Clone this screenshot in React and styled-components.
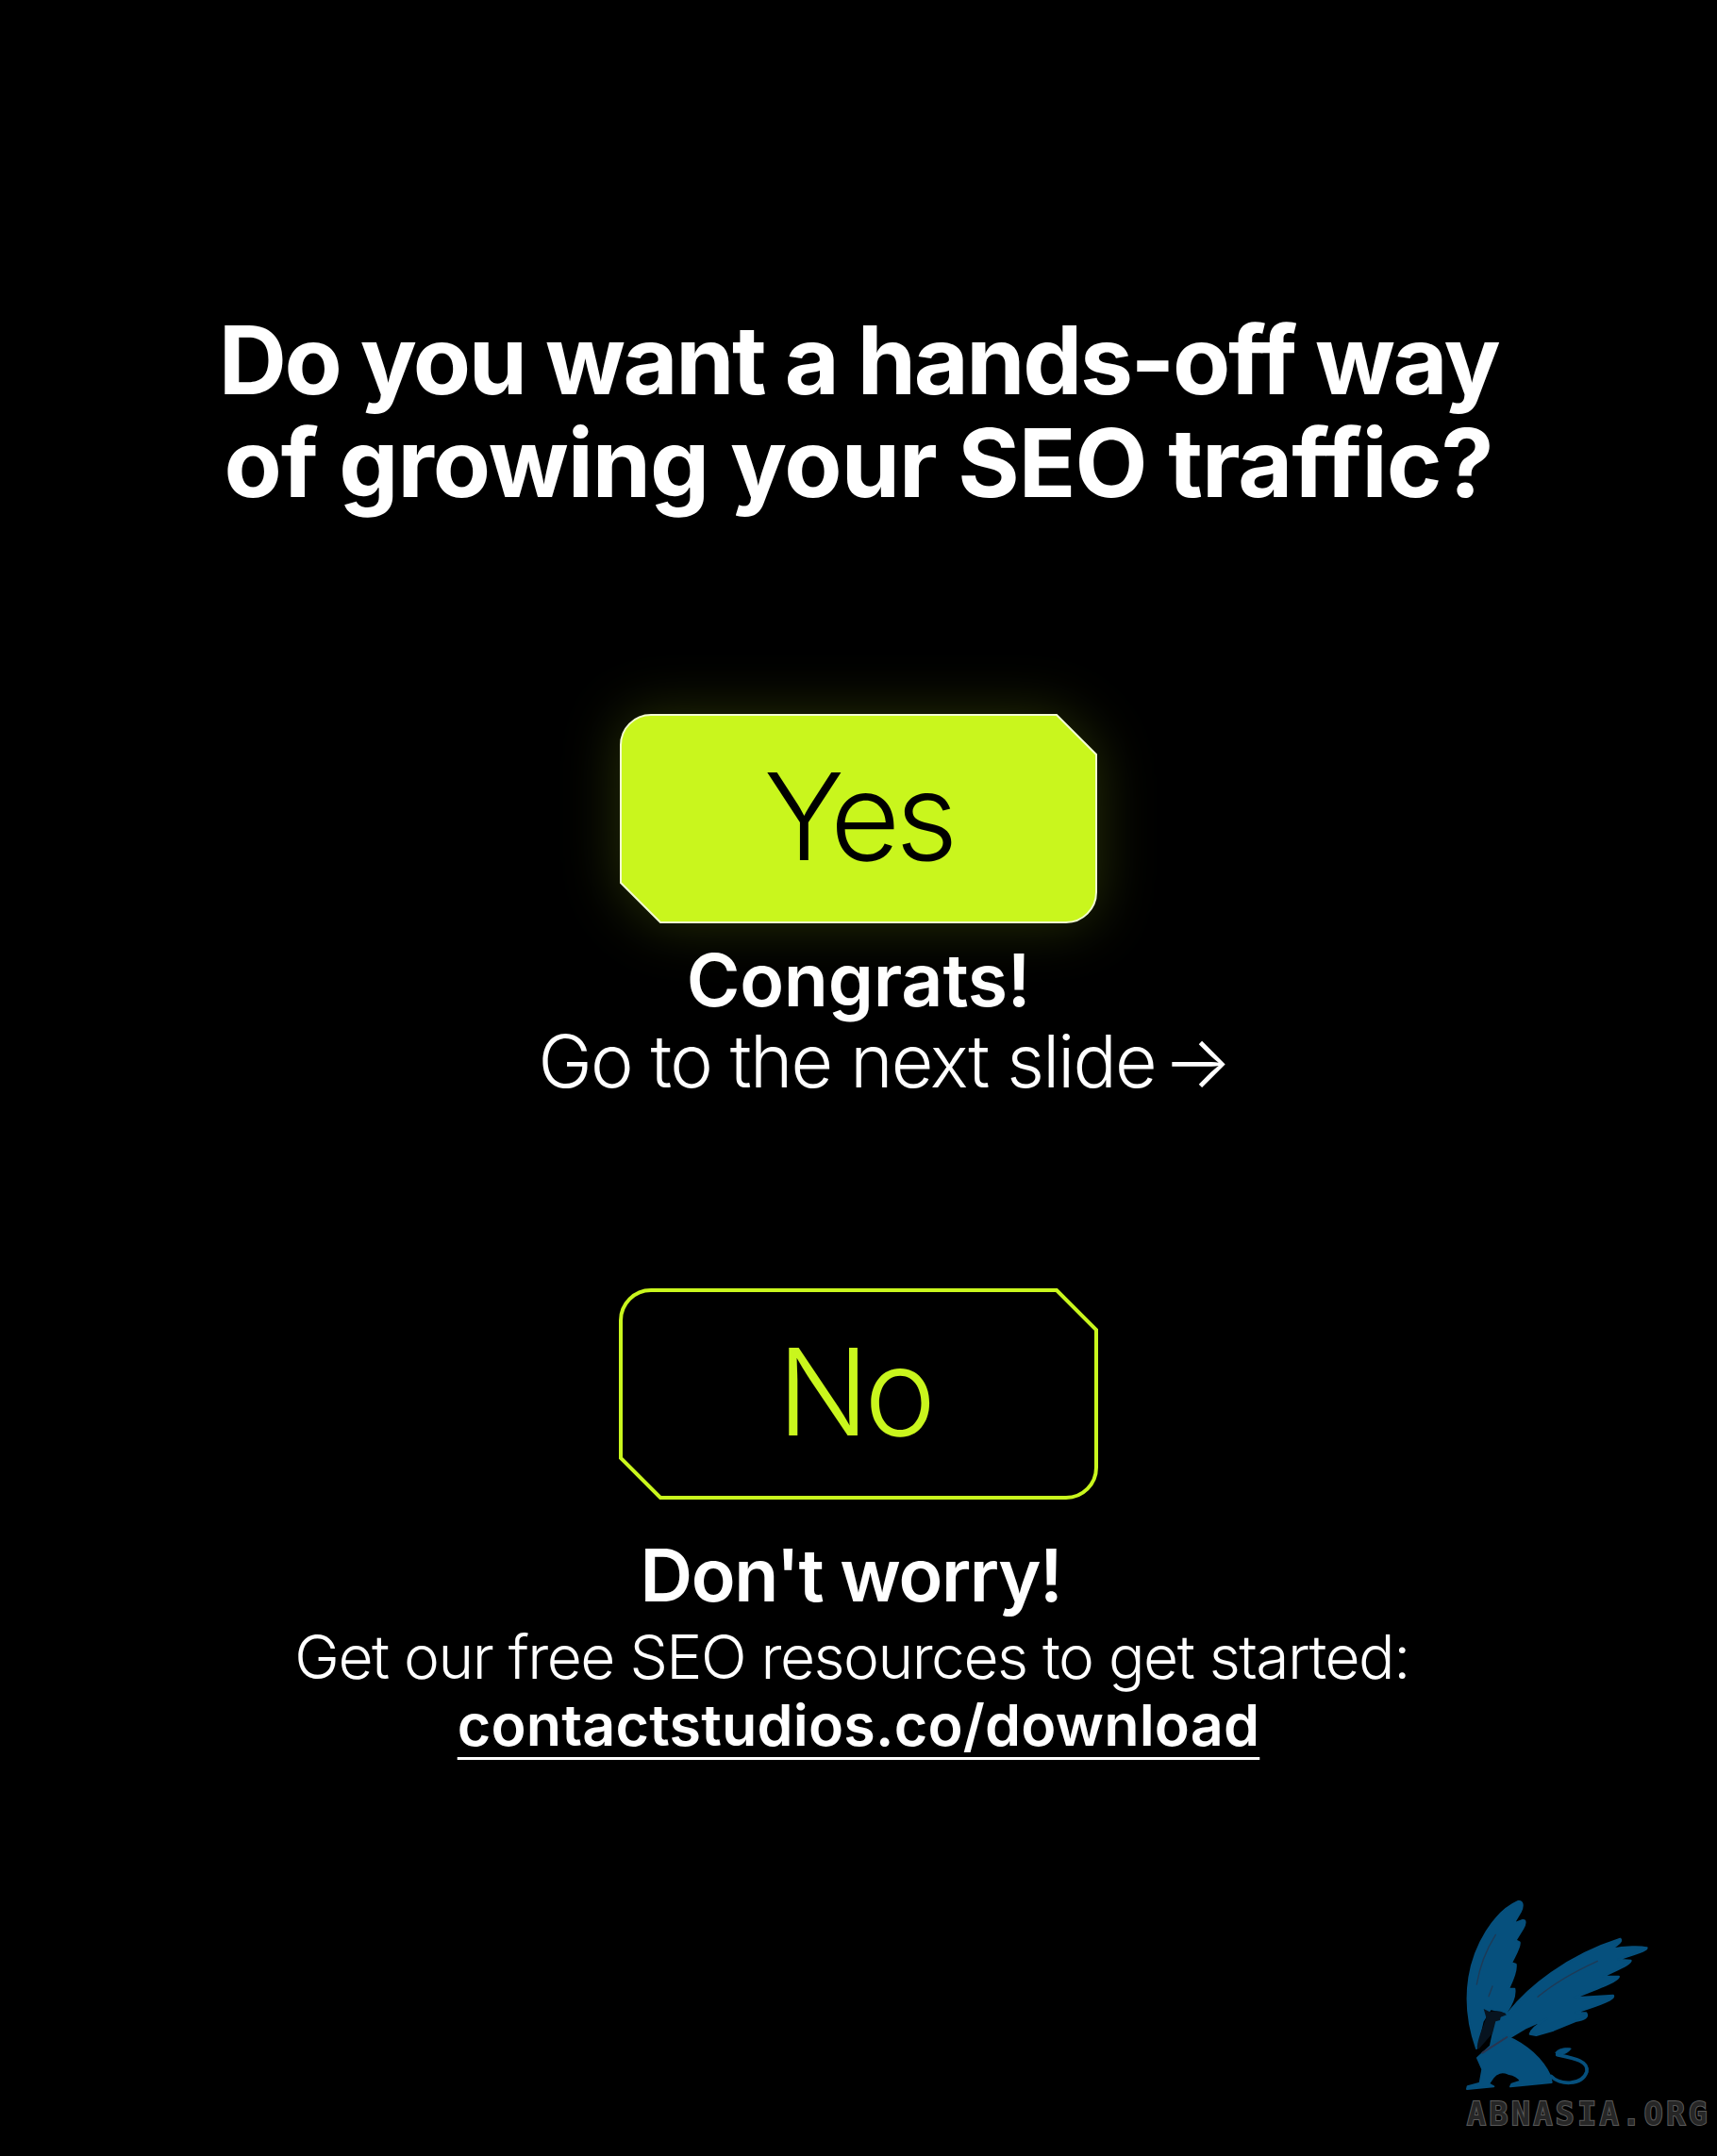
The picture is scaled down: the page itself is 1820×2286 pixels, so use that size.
import React from 'react';
import styled, { createGlobalStyle } from 'styled-components';

const LIME = '#c9f61d';
const LOGO_BLUE = '#06507d';

const GlobalStyle = createGlobalStyle`
  html, body {
    margin: 0;
    padding: 0;
    background: #000;
  }
`;

const Page = styled.div`
  position: relative;
  width: 1820px;
  height: 2286px;
  padding-top: 327px;
  box-sizing: border-box;
  display: flex;
  flex-direction: column;
  align-items: center;
  background: #000;
  color: #fff;
  font-family: Inter, 'Liberation Sans', sans-serif;
  text-align: center;
  overflow: hidden;
`;

const Heading = styled.h1`
  margin: 0 0 213px;
  font-size: 100px;
  line-height: 109px;
  font-weight: 700;
`;

const HeadingLine = styled.span`
  display: block;
  letter-spacing: ${(p) => p.$tracking}px;
`;

const ChoiceButton = styled.div`
  position: relative;
  width: 504px;
  height: 220px;
  display: flex;
  align-items: center;
  justify-content: center;
  padding-bottom: 5px;
  box-sizing: border-box;
  font-size: 128px;
  font-weight: 300;
  letter-spacing: -5px;
  color: ${(p) => (p.$filled ? '#000' : LIME)};
`;

const ButtonShape = styled.svg`
  position: absolute;
  inset: 0;
  overflow: visible;
  filter: ${(p) => (p.$filled ? 'drop-shadow(0 0 30px rgba(201, 246, 29, 0.2))' : 'none')};
`;

const ButtonLabel = styled.span`
  position: relative;
  margin-right: ${(p) => p.$nudge || 0}px;
`;

const Title = styled.div`
  margin-top: ${(p) => p.$top}px;
  padding-right: ${(p) => p.$nudge || 0}px;
  font-size: 77px;
  line-height: 88px;
  font-weight: 600;
  letter-spacing: ${(p) => p.$tracking}px;
`;

const NextLine = styled.div`
  display: flex;
  margin-bottom: 201px;
  padding-left: 55px;
  font-size: 77px;
  line-height: 84px;
  font-weight: 300;
  letter-spacing: -1.8px;
`;

const Arrow = styled.span`
  margin-left: 8px;
`;

const ResourceLine = styled.div`
  margin-top: 7px;
  padding-right: 14px;
  font-size: 64px;
  line-height: 72px;
  font-weight: 300;
  letter-spacing: -1.5px;
`;

const DownloadLink = styled.a`
  margin-top: 2px;
  font-size: 61px;
  line-height: 68px;
  font-weight: 600;
  letter-spacing: 0.2px;
  color: #fff;
  text-decoration: underline;
  text-decoration-thickness: 3px;
  text-underline-offset: 12px;
  text-decoration-skip-ink: none;
`;

const Watermark = styled.div`
  position: absolute;
  left: 1500px;
  top: 1980px;
  width: 320px;
  height: 306px;
`;

const WatermarkText = styled.div`
  position: absolute;
  left: 55px;
  top: 243px;
  font-family: 'DejaVu Sans Mono', monospace;
  font-size: 33px;
  line-height: 38px;
  font-weight: 700;
  letter-spacing: 3.6px;
  white-space: nowrap;
  color: #262626;
  -webkit-text-stroke: 2px #5a5a5a;
  paint-order: stroke fill;
`;

const ChamferedShape = ({ filled }) => (
  <ButtonShape $filled={filled} width="504" height="220" viewBox="0 0 504 220">
    <path
      d="M32 0 H462 L504 42 V188 A32 32 0 0 1 472 220 H42 L0 178 V32 A32 32 0 0 1 32 0 Z"
      fill={filled ? LIME : 'none'}
      stroke={filled ? '#f2fbd0' : LIME}
      strokeWidth={filled ? 2 : 4}
    />
  </ButtonShape>
);

const Griffin = () => (
  <svg width="320" height="306" viewBox="0 0 960 918">
    <g fill={LOGO_BLUE} stroke={LOGO_BLUE} strokeWidth="6" strokeLinejoin="round">
      {/* left wing */}
      <path d="M328 108 C342 106 345 122 336 140 L314 178 L342 168 C354 166 350 182 343 194 L320 232 L332 238 C336 250 320 276 306 304 L320 308 C324 332 306 366 297 386 L316 386 C320 412 305 440 290 462 L240 450 L215 490 L195 576 C168 500 161 420 172 350 C188 250 250 142 328 108 Z" />
      {/* right wing */}
      <path d="M296 462 C360 382 480 282 652 227 C660 232 650 244 622 260 C670 251 718 251 737 256 C738 265 700 274 646 293 L686 296 C690 306 640 326 598 347 L648 347 C652 358 600 378 506 415 L630 407 C636 418 600 434 510 462 L544 463 C552 476 540 484 510 489 L440 518 L385 534 L365 530 C370 512 398 494 418 482 L350 512 L300 542 L282 538 L240 566 L256 490 Z" />
      {/* body */}
      <path d="M198 606 L240 568 L292 538 C352 562 405 610 430 664 L434 684 L303 697 L307 689 L335 680 C330 668 320 660 296 656 C278 648 258 652 248 668 L234 688 L250 697 L165 705 L167 697 L206 686 L214 642 Z" />
      {/* tail tuft */}
      <path strokeWidth="2" d="M446 590 C452 578 476 572 496 576 C488 590 470 596 454 598 Z" />
    </g>
    {/* neck and head */}
    <path
      fill="#07131f"
      d="M218 450 L238 460 C258 454 278 456 291 469 L272 476 L270 486 L256 490 L246 528 L202 578 L197 574 C200 540 216 510 226 478 Z"
    />
    {/* tail */}
    <path
      fill="none"
      stroke={LOGO_BLUE}
      strokeWidth="11"
      strokeLinecap="round"
      d="M432 664 C458 692 530 696 546 650 C552 616 510 608 452 596"
    />
    {/* feather lines */}
    <g fill="none" stroke="#1e3a56" strokeWidth="4" strokeLinecap="round">
      <path d="M196 372 C206 310 226 262 256 214" />
      <path d="M234 410 L246 378" />
      <path d="M390 412 C440 370 510 330 580 298" />
      <path strokeWidth="6" stroke="#2a3550" d="M214 590 L292 540" />
    </g>
  </svg>
);

const App = () => (
  <>
    <GlobalStyle />
    <Page>
      <Heading>
        <HeadingLine $tracking={-2.35}>Do you want a hands-off way</HeadingLine>
        <HeadingLine $tracking={-1}>of growing your SEO traffic?</HeadingLine>
      </Heading>

      <ChoiceButton $filled>
        <ChamferedShape filled />
        <ButtonLabel>Yes</ButtonLabel>
      </ChoiceButton>
      <Title $top={17} $tracking={-0.2}>Congrats!</Title>
      <NextLine>
        <span>Go to the next slide</span>
        <Arrow>→</Arrow>
      </NextLine>

      <ChoiceButton>
        <ChamferedShape />
        <ButtonLabel $nudge={9}>No</ButtonLabel>
      </ChoiceButton>
      <Title $top={38} $tracking={-1.4} $nudge={16}>Don't worry!</Title>
      <ResourceLine>Get our free SEO resources to get started:</ResourceLine>
      <DownloadLink>contactstudios.co/download</DownloadLink>

      <Watermark>
        <Griffin />
        <WatermarkText>ABNASIA.ORG</WatermarkText>
      </Watermark>
    </Page>
  </>
);

export default App;
